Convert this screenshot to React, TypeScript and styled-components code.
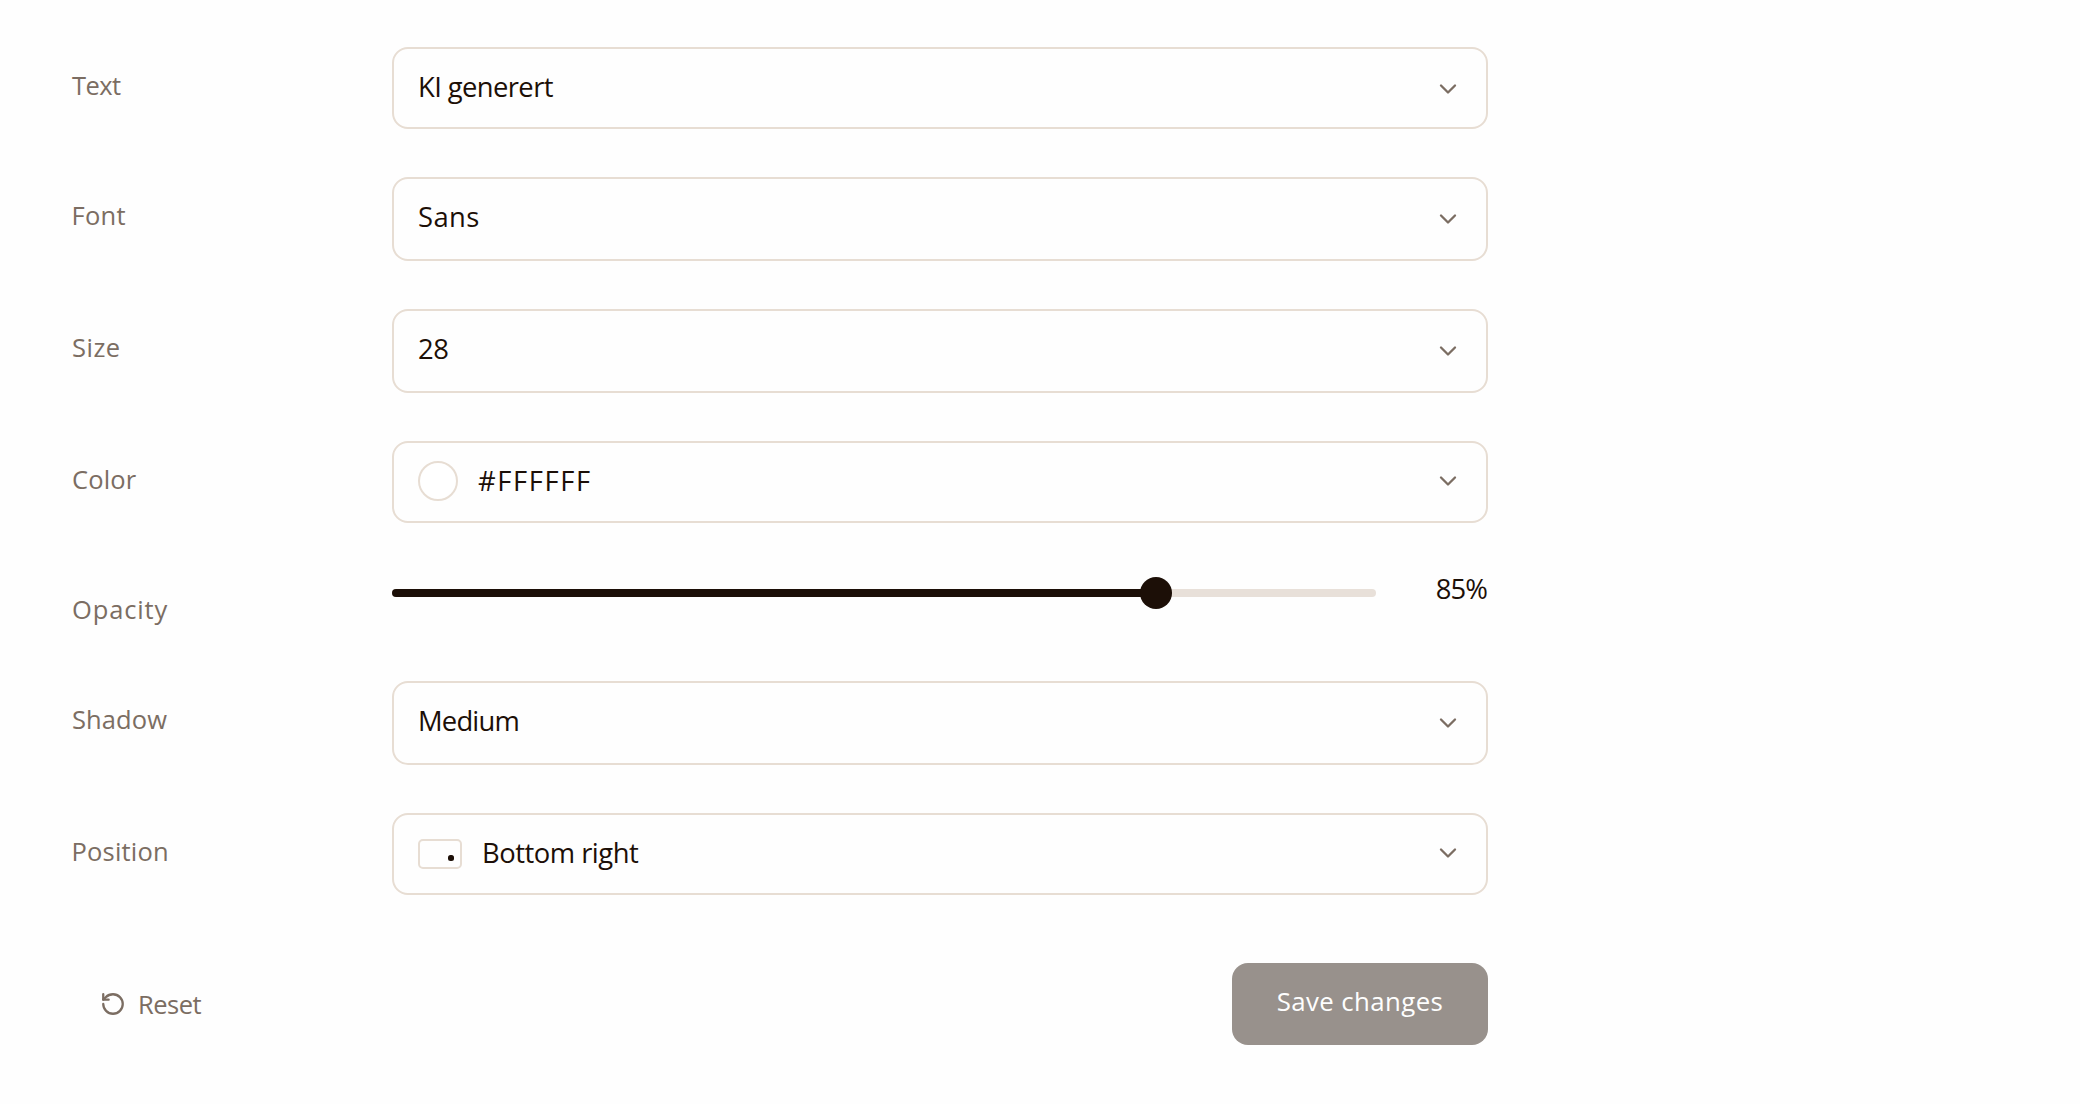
import React, { useState } from "react";
import styled, { createGlobalStyle } from "styled-components";
import { ChevronDown, RotateCcw } from "lucide-react";

const color = {
  page: "#fefefe",
  ink: "#1c0f07",
  muted: "#7b6d62",
  line: "#e7ddd3",
  track: "#e8e0d9",
  button: "#98918c",
};

const GlobalStyle = createGlobalStyle`
  *, *::before, *::after { box-sizing: border-box; }
  body {
    margin: 0;
    background: ${color.page};
    color: ${color.ink};
    font-family: "Open Sans", sans-serif;
  }
  button { font: inherit; color: inherit; background: none; border: 0; cursor: pointer; }
`;

const Form = styled.form`
  display: flex;
  flex-direction: column;
  gap: 48px;
  width: 1488px;
  min-height: 1104px;
  padding: 47px 0 0 72px;
`;

const Row = styled.div<{ $height: number }>`
  display: grid;
  grid-template-columns: 320px 1096px;
  height: ${(p) => p.$height}px;
`;

const Label = styled.label<{ $track: number; $shift?: number }>`
  padding-top: 20px;
  margin-left: ${(p) => p.$shift ?? 0}px;
  font-size: 25.5px;
  line-height: 36px;
  letter-spacing: ${(p) => p.$track}px;
  color: ${color.muted};
`;

const Select = styled.button`
  display: flex;
  align-items: flex-start;
  gap: 20px;
  height: 100%;
  padding: 18px 24px 0;
  border: 2px solid ${color.line};
  border-radius: 16px;
  text-align: left;
`;

const Value = styled.span<{ $track: number }>`
  flex: 1;
  font-size: 27.4px;
  line-height: 40px;
  letter-spacing: ${(p) => p.$track}px;
`;

const Chevron = styled(ChevronDown)<{ $drop: number }>`
  flex: none;
  margin-top: ${(p) => p.$drop}px;
  color: ${color.muted};
`;

const Swatch = styled.span`
  flex: none;
  width: 40px;
  height: 40px;
  border: 2px solid ${color.line};
  border-radius: 50%;
  background: #ffffff;
`;

const Frame = styled.span`
  flex: none;
  display: flex;
  align-items: flex-end;
  justify-content: flex-end;
  width: 44px;
  height: 30px;
  margin-top: 6px;
  padding: 6px;
  border: 2px solid ${color.line};
  border-radius: 5px;

  &::after {
    content: "";
    width: 6px;
    height: 6px;
    border-radius: 2.5px;
    background: ${color.ink};
  }
`;

const SliderRow = styled.div`
  display: flex;
  align-items: flex-start;
  justify-content: space-between;
`;

const Slider = styled.div`
  display: flex;
  align-items: center;
  width: 984px;
  height: 32px;
  margin-top: 6px;
`;

const Rail = styled.div`
  position: relative;
  width: 100%;
  height: 8px;
  border-radius: 4px;
  background: ${color.track};
`;

const Fill = styled.div`
  height: 8px;
  border-radius: 4px;
  background: ${color.ink};
`;

const Thumb = styled.div`
  position: absolute;
  top: -12px;
  width: 32px;
  height: 32px;
  margin-left: -16px;
  border-radius: 50%;
  background: ${color.ink};
`;

const Percent = styled.output`
  padding-right: 1px;
  font-size: 27.4px;
  line-height: 36px;
  letter-spacing: -0.9px;
`;

const Footer = styled.div`
  display: flex;
  align-items: flex-start;
  justify-content: space-between;
  height: 82px;
  margin-top: 20px;
`;

const ResetButton = styled.button`
  display: flex;
  align-items: center;
  gap: 12px;
  height: 82px;
  padding: 0 28px;
  color: ${color.muted};
`;

const ResetText = styled.span`
  padding-bottom: 1px;
  font-size: 25.5px;
  line-height: 36px;
  letter-spacing: -0.5px;
`;

const SaveButton = styled.button`
  width: 256px;
  height: 82px;
  padding: 0 0 6px;
  border-radius: 16px;
  background: ${color.button};
  color: #fefefe;
  font-size: 25.8px;
  font-weight: 500;
  line-height: 36px;
  letter-spacing: 0.4px;
`;

type Field = {
  label: string;
  labelTrack: number;
  labelShift?: number;
  value: string;
  valueTrack: number;
  height: number;
  adornment?: React.ReactNode;
  drop: number;
};

const before: Field[] = [
  { label: "Text", labelTrack: -0.6, value: "KI generert", valueTrack: -0.6, height: 82, drop: 8 },
  { label: "Font", labelTrack: 0.3, labelShift: -0.5, value: "Sans", valueTrack: 0.4, height: 84, drop: 8 },
  { label: "Size", labelTrack: 0.5, value: "28", valueTrack: -0.4, height: 84, drop: 8 },
  { label: "Color", labelTrack: 0.15, value: "#FFFFFF", valueTrack: 1.6, height: 82, drop: 6, adornment: <Swatch /> },
];

const after: Field[] = [
  { label: "Shadow", labelTrack: 0.1, value: "Medium", valueTrack: -0.8, height: 84, drop: 8 },
  { label: "Position", labelTrack: 0.2, labelShift: -0.5, value: "Bottom right", valueTrack: -0.5, height: 82, drop: 6, adornment: <Frame /> },
];

const SelectField = ({ field }: { field: Field }) => (
  <Row $height={field.height}>
    <Label $track={field.labelTrack} $shift={field.labelShift}>{field.label}</Label>
    <Select type="button">
      {field.adornment}
      <Value $track={field.valueTrack}>{field.value}</Value>
      <Chevron size={28} strokeWidth={2} $drop={field.drop} />
    </Select>
  </Row>
);

const MIN = 35;
const TRAVEL = 952;

export default function App() {
  const [opacity] = useState(85);
  const center = Math.round(16 + ((opacity - MIN) / (100 - MIN)) * TRAVEL) + 16;

  return (
    <>
      <GlobalStyle />
      <Form>
        {before.map((f) => <SelectField key={f.label} field={f} />)}
        <Row $height={62}>
          <Label $track={0.85}>Opacity</Label>
          <SliderRow>
            <Slider>
              <Rail>
                <Fill style={{ width: `${center}px` }} />
                <Thumb style={{ left: `${center}px` }} />
              </Rail>
            </Slider>
            <Percent>{opacity}%</Percent>
          </SliderRow>
        </Row>
        {after.map((f) => <SelectField key={f.label} field={f} />)}
        <Footer>
          <ResetButton type="button">
            <RotateCcw size={26} strokeWidth={2.1} />
            <ResetText>Reset</ResetText>
          </ResetButton>
          <SaveButton type="submit">Save changes</SaveButton>
        </Footer>
      </Form>
    </>
  );
}
